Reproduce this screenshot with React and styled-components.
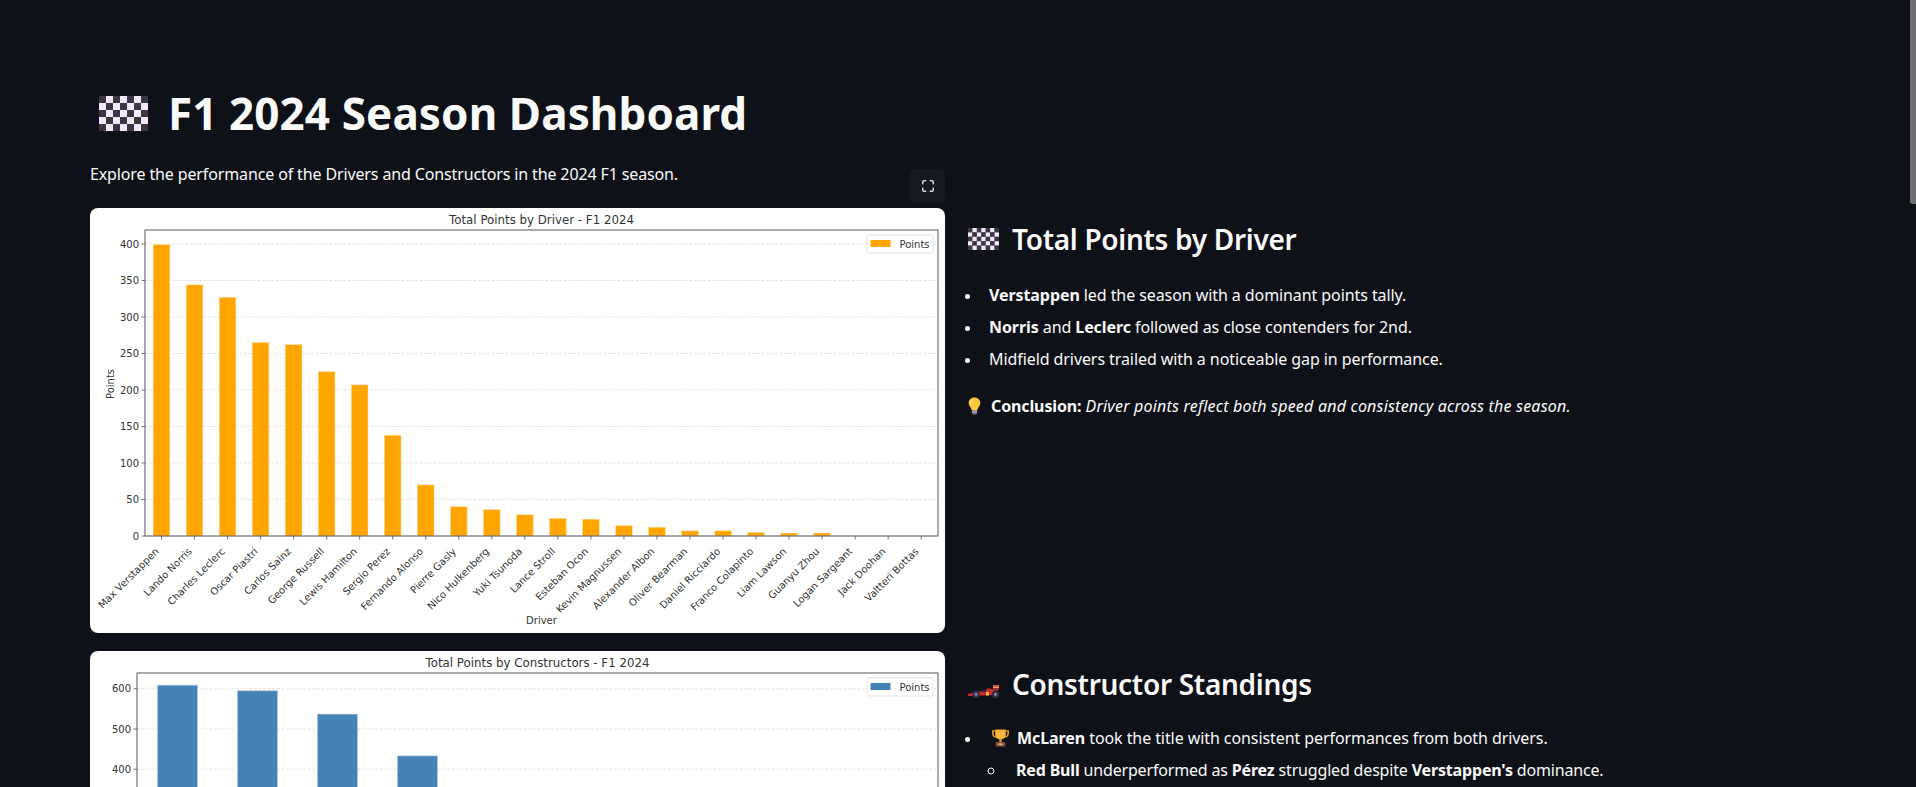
import React from 'react'
import styled, { createGlobalStyle } from 'styled-components'
import { Maximize } from 'lucide-react'

const GlobalStyle = createGlobalStyle`
  html, body {
    margin: 0;
    height: 100%;
    overflow: hidden;
    background: #0e1117;
  }
  body {
    color: #fafafa;
    font-family: "Noto Sans", "Open Sans", sans-serif;
  }
`

const drivers = [
  ['Max Verstappen', 399],
  ['Lando Norris', 344],
  ['Charles Leclerc', 327],
  ['Oscar Piastri', 265],
  ['Carlos Sainz', 262],
  ['George Russell', 225],
  ['Lewis Hamilton', 207],
  ['Sergio Perez', 138],
  ['Fernando Alonso', 70],
  ['Pierre Gasly', 40],
  ['Nico Hulkenberg', 36],
  ['Yuki Tsunoda', 29],
  ['Lance Stroll', 24],
  ['Esteban Ocon', 23],
  ['Kevin Magnussen', 14],
  ['Alexander Albon', 12],
  ['Oliver Bearman', 7],
  ['Daniel Ricciardo', 7],
  ['Franco Colapinto', 5],
  ['Liam Lawson', 4],
  ['Guanyu Zhou', 4],
  ['Logan Sargeant', 0],
  ['Jack Doohan', 0],
  ['Valtteri Bottas', 0],
]

const constructors = [609, 595, 537, 433, 94, 65, 46, 31, 24, 4]

const Page = styled.main`
  position: relative;
  height: 100vh;
  overflow: hidden;
  box-sizing: border-box;
  padding: 86px 100px 0 90px;
`
const ScrollThumb = styled.div`
  position: absolute;
  top: 0;
  right: 0;
  width: 6px;
  height: 204px;
  background: #6e6e6e;
  border-bottom-left-radius: 3px;
`
const Title = styled.h1`
  display: flex;
  align-items: center;
  gap: 20px;
  margin: 0 0 0 9px;
  height: 54px;
  font-size: 44px;
  font-weight: 700;
  line-height: 54px;
  letter-spacing: 0.1px;
`
const Intro = styled.p`
  margin: 22px 0 0;
  font-size: 16px;
  line-height: 24px;
  letter-spacing: -0.13px;
`
const Rows = styled.div`
  display: flex;
  flex-direction: column;
  gap: 18px;
  margin-top: 22px;
`
const Row = styled.section`
  display: grid;
  grid-template-columns: 855px 1fr;
  column-gap: 16px;
`
const ChartCol = styled.div`
  position: relative;
`
const ExpandButton = styled.button`
  position: absolute;
  top: -39px;
  right: 0;
  width: 35px;
  height: 34px;
  display: flex;
  align-items: center;
  justify-content: center;
  padding: 0;
  border: 0;
  border-radius: 6px;
  background: #151922;
  color: #d8d8d8;
`
const ChartCard = styled.svg`
  display: block;
  width: 855px;
  height: 425px;
  background: #fff;
  border-radius: 8px;
  font-family: "DejaVu Sans", sans-serif;
`
const Notes = styled.div`
  padding-top: ${p => p.$top}px;
`
const Heading = styled.h3`
  display: flex;
  align-items: center;
  gap: 13px;
  margin: 0 0 0 7px;
  height: 44px;
  font-size: 28px;
  font-weight: 600;
  line-height: 44px;
  letter-spacing: -0.3px;
`
const List = styled.ul`
  margin: ${p => p.$top}px 0 0;
  padding: 0 0 0 21px;
  font-size: 16px;
  line-height: 24px;
  letter-spacing: -0.08px;
`
const Item = styled.li`
  margin-top: ${p => (p.$first ? 0 : 8)}px;
  padding-left: 7px;
  &::marker {
    font-size: 15px;
  }
`
const SubList = styled.ul`
  margin: 0;
  padding-left: 17px;
  letter-spacing: -0.17px;
`
const SubItem = styled.li`
  margin-top: 8px;
  padding-left: 10px;
`
const InlineIcon = styled.span`
  display: inline-block;
  vertical-align: -3px;
  margin: -4px ${p => p.$right}px -4px ${p => p.$left}px;
  line-height: 0;
`
const Conclusion = styled.p`
  margin: 23px 0 0;
  font-size: 16px;
  line-height: 24px;
  letter-spacing: -0.12px;
  & em {
    letter-spacing: 0.2px;
  }
`

// pixelated checkered flag emoji
const FlagIcon = ({ width, height }) => {
  const squares = []
  for (let row = 0; row < 5; row++) {
    for (let col = 0; col < 7; col++) {
      squares.push(
        <rect key={row + '-' + col} x={col} y={row} width="1.01" height="1.01" fill={(row + col) % 2 ? '#f1e8ff' : '#3a3740'} />
      )
    }
  }
  return (
    <svg width={width} height={height} viewBox="0 0 7 5" preserveAspectRatio="none" style={{ flex: 'none' }}>
      {squares}
    </svg>
  )
}

const CarIcon = () => (
  <svg width="33" height="13" viewBox="0 0 33 13" style={{ flex: 'none', marginTop: 15, marginRight: -2 }}>
    <path d="M0 9 L8 7 L17 6 L20 3 L25 5 L27 5 L27 10 L2 11 L0 11 Z" fill="#c92b2b" />
    <rect x="25" y="0" width="6" height="1.6" fill="#e2574c" />
    <rect x="25" y="1.6" width="6" height="1.6" fill="#f0a24a" />
    <rect x="25" y="3.2" width="6" height="1.8" fill="#b52a2a" />
    <rect x="26" y="5" width="4" height="3" fill="#7a2230" />
    <rect x="18" y="7" width="3" height="3.5" fill="#f4b63f" />
    <rect x="14" y="5" width="4" height="2" fill="#3a2c3c" />
    <circle cx="8" cy="9.4" r="3.6" fill="#372e4c" />
    <circle cx="27.5" cy="9.4" r="3.6" fill="#372e4c" />
    <circle cx="8" cy="9.4" r="1.3" fill="#9c90b8" />
    <circle cx="27.5" cy="9.4" r="1.3" fill="#9c90b8" />
  </svg>
)

const BulbIcon = () => (
  <svg width="13" height="18" viewBox="0 0 14 20">
    <path d="M7 0.5 C3 0.5 0.5 3.4 0.5 6.6 C0.5 9.8 3.2 11 3.8 14.5 L10.2 14.5 C10.8 11 13.5 9.8 13.5 6.6 C13.5 3.4 11 0.5 7 0.5 Z" fill="#fbc93f" />
    <path d="M4 3.5 C3 4.4 2.6 5.6 2.8 7" stroke="#fff0b0" strokeWidth="1.2" fill="none" />
    <rect x="4" y="14.5" width="6" height="4" rx="1" fill="#9a94a6" />
    <rect x="5.2" y="18.4" width="3.6" height="1.4" fill="#5d5864" />
  </svg>
)

const TrophyIcon = () => (
  <svg width="17" height="18" viewBox="0 0 16 20" preserveAspectRatio="none">
    <path d="M3 2 H0.8 V5 C0.8 7.5 2.6 9 4.6 9 M13 2 H15.2 V5 C15.2 7.5 13.4 9 11.4 9" stroke="#f0a52e" strokeWidth="1.5" fill="none" />
    <path d="M3 0.5 H13 V6 C13 9.5 10.5 11.5 8 11.5 C5.5 11.5 3 9.5 3 6 Z" fill="#f6b73c" />
    <rect x="6.8" y="11" width="2.4" height="3.5" fill="#d98d2b" />
    <rect x="3.5" y="14.5" width="9" height="5" rx="0.8" fill="#8a4b45" />
    <rect x="6" y="16" width="4" height="2" fill="#e3b35c" />
  </svg>
)

const AXIS = '#666'
const INK = '#333'

const Grid = ({ left, right, ticks, yOf }) => ticks.map(t => (
  <line key={t} x1={left} x2={right} y1={yOf(t)} y2={yOf(t)} stroke="#e2e2e2" strokeWidth="1" strokeDasharray="3 1.5" />
))

const YTicks = ({ left, ticks, yOf }) => ticks.map(t => (
  <g key={t}>
    <line x1={left - 3.5} x2={left} y1={yOf(t)} y2={yOf(t)} stroke={AXIS} strokeWidth="0.9" />
    <text x={left - 6} y={yOf(t) + 3.6} fontSize="10" fill={INK} textAnchor="end">{t}</text>
  </g>
))

const Legend = ({ right, color }) => (
  <g>
    <rect x={right - 71} y={27} width="66" height="18" rx="2" fill="#fff" fillOpacity="0.85" stroke="#dedede" strokeWidth="0.8" />
    <rect x={right - 67.5} y={32} width="20" height="7" fill={color} />
    <text x={right - 38.5} y={39.6} fontSize="10" fill={INK}>Points</text>
  </g>
)

// Bars are sized from the same pixel scale as the reference plot
const DriverChart = () => {
  const left = 55, top = 22, right = 848, bottom = 328
  const ticks = [0, 50, 100, 150, 200, 250, 300, 350, 400]
  const yOf = v => bottom - v * 0.73
  const xOf = i => 71.5 + i * 33.03
  return (
    <ChartCard viewBox="0 0 855 425">
      <Grid left={left} right={right} ticks={ticks} yOf={yOf} />
      {drivers.map(([name, pts], i) => (
        <g key={name}>
          {pts > 0 && (
            <rect x={xOf(i) - 8.3} y={yOf(pts)} width="16.6" height={pts * 0.73} fill="#ffa500" stroke="#ffd68a" strokeWidth="0.5" />
          )}
          <line x1={xOf(i)} x2={xOf(i)} y1={bottom} y2={bottom + 3.5} stroke={AXIS} strokeWidth="0.9" />
          <text
            x={xOf(i) - 2}
            y={bottom + 16}
            fontSize="10"
            fill={INK}
            textAnchor="end"
            transform={`rotate(-45 ${xOf(i) - 2} ${bottom + 16})`}
          >
            {name}
          </text>
        </g>
      ))}
      <YTicks left={left} ticks={ticks} yOf={yOf} />
      <Legend right={right} color="#ffa500" />
      <rect x={left} y={top} width={right - left} height={bottom - top} fill="none" stroke={AXIS} strokeWidth="1.1" />
      <text x={451.5} y={top - 6} fontSize="11.8" fill={INK} textAnchor="middle">Total Points by Driver - F1 2024</text>
      <text x={451.5} y={416} fontSize="10" fill={INK} textAnchor="middle">Driver</text>
      <text x={0} y={0} fontSize="10" fill={INK} textAnchor="middle" transform="translate(24 176) rotate(-90)">Points</text>
    </ChartCard>
  )
}

const ConstructorChart = () => {
  const left = 47, top = 22, right = 848, bottom = 279
  // only the ticks above the fold of the page are shown
  const ticks = [400, 500, 600]
  const yOf = v => bottom - v * 0.402
  const xOf = i => 87.5 + i * 80
  return (
    <ChartCard viewBox="0 0 855 425">
      <Grid left={left} right={right} ticks={ticks} yOf={yOf} />
      {constructors.map((pts, i) => (
        <rect key={i} x={xOf(i) - 20} y={yOf(pts)} width="40" height={pts * 0.402} fill="#4682b4" stroke="#a9c6de" strokeWidth="0.6" />
      ))}
      <YTicks left={left} ticks={ticks} yOf={yOf} />
      <Legend right={right} color="#4682b4" />
      <rect x={left} y={top} width={right - left} height={bottom - top} fill="none" stroke={AXIS} strokeWidth="1.1" />
      <text x={447.5} y={top - 6} fontSize="11.8" fill={INK} textAnchor="middle">Total Points by Constructors - F1 2024</text>
    </ChartCard>
  )
}

const App = () => (
  <>
    <GlobalStyle />
    <Page>
      <Title><FlagIcon width={49} height={35} />F1 2024 Season Dashboard</Title>
      <Intro>Explore the performance of the Drivers and Constructors in the 2024 F1 season.</Intro>
      <Rows>
        <Row>
          <ChartCol>
            <ExpandButton aria-label="Fullscreen"><Maximize size={14} strokeWidth={2.6} /></ExpandButton>
            <DriverChart />
          </ChartCol>
          <Notes $top={9}>
            <Heading><FlagIcon width={31} height={22} />Total Points by Driver</Heading>
            <List $top={22}>
              <Item $first><strong>Verstappen</strong> led the season with a dominant points tally.</Item>
              <Item><strong>Norris</strong> and <strong>Leclerc</strong> followed as close contenders for 2nd.</Item>
              <Item>Midfield drivers trailed with a noticeable gap in performance.</Item>
            </List>
            <Conclusion>
              <InlineIcon $left={7} $right={10}><BulbIcon /></InlineIcon>
              <strong>Conclusion:</strong> <em>Driver points reflect both speed and consistency across the season.</em>
            </Conclusion>
          </Notes>
        </Row>
        <Row>
          <ChartCol>
            <ConstructorChart />
          </ChartCol>
          <Notes $top={11}>
            <Heading><CarIcon />Constructor Standings</Heading>
            <List $top={20}>
              <Item $first>
                <InlineIcon $left={3} $right={8}><TrophyIcon /></InlineIcon>
                <strong>McLaren</strong> took the title with consistent performances from both drivers.
                <SubList>
                  <SubItem><strong>Red Bull</strong> underperformed as <strong>Pérez</strong> struggled despite <strong>Verstappen's</strong> dominance.</SubItem>
                </SubList>
              </Item>
            </List>
          </Notes>
        </Row>
      </Rows>
      <ScrollThumb />
    </Page>
  </>
)

export default App
